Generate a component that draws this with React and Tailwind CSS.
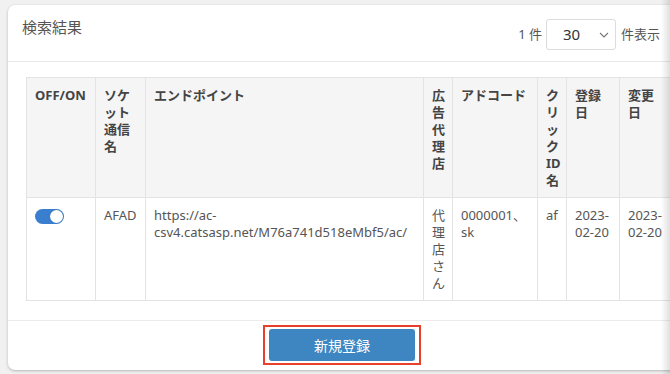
import React from "react";

const font = { fontFamily: '"Noto Sans", "Noto Sans CJK JP", sans-serif' };

export default function App() {
  const th = "border border-[#e3e3e3] align-top text-left px-[8px] pt-[9px] pb-[8px] font-bold text-[#444] text-[13px] leading-[17px]";
  const td = "border border-[#e3e3e3] align-top text-left px-[8px] pt-[9px] pb-[8px] text-[#555] text-[13px] leading-[17px]";
  return (
    <div className="relative w-[670px] h-[374px] overflow-hidden bg-[#f1f1f1]" style={font}>
      <div className="ml-[8px] mt-[5px] w-[680px] h-[365px] bg-white rounded-[7px] shadow-[0_1px_3px_rgba(0,0,0,0.25)] flex flex-col overflow-hidden">
        <div className="h-[57px] shrink-0 border-b border-[#e8e8e8] flex items-start justify-between pl-[14px] pr-[28px]">
          <div className="text-[15px] text-[#555] mt-[13px] leading-[18px]">検索結果</div>
          <div className="flex items-center mt-[14px] text-[13px] text-[#555]">
            <span className="mr-[4px]">1 件</span>
            <div className="w-[70px] h-[31px] border border-[#dcdcdc] rounded-[3px] flex items-center pl-[16px] pr-[6px] justify-between">
              <span className="text-[15px] text-[#333]">30</span>
              <svg width="10" height="6" viewBox="0 0 10 6" className="mt-[1px]">
                <path d="M1 1 L5 5 L9 1" fill="none" stroke="#777" strokeWidth="1.1" />
              </svg>
            </div>
            <span className="ml-[5px]">件表示</span>
          </div>
        </div>
        <div className="pl-[18px] pt-[15px] pb-[19px] border-b border-[#ececec] overflow-hidden">
          <table className="table-fixed border-collapse w-[720px]">
            <colgroup>
              <col className="w-[69px]" />
              <col className="w-[50px]" />
              <col className="w-[278px]" />
              <col className="w-[29px]" />
              <col className="w-[85px]" />
              <col className="w-[29px]" />
              <col className="w-[53px]" />
              <col />
            </colgroup>
            <thead>
              <tr className="bg-[#f5f5f5]">
                <th className={th}>OFF/ON</th>
                <th className={th}>ソケット通信名</th>
                <th className={th}>エンドポイント</th>
                <th className={th}>広告代理店</th>
                <th className={th}>アドコード</th>
                <th className={th}>クリックID名</th>
                <th className={th}>登録日</th>
                <th className={th}>
                  <div className="w-[37px]">変更日</div>
                </th>
              </tr>
            </thead>
            <tbody>
              <tr>
                <td className={td}>
                  <div className="mt-[2px] w-[29px] h-[15px] rounded-full bg-[#3a7fcf] relative">
                    <div className="absolute right-[1px] top-[1px] w-[13px] h-[13px] rounded-full bg-white shadow-[0_0_1px_rgba(0,0,0,0.3)]" />
                  </div>
                </td>
                <td className={td}>AFAD</td>
                <td className={td}>https://ac-<br />csv4.catsasp.net/M76a741d518eMbf5/ac/</td>
                <td className={td}>代理店さん</td>
                <td className={td}>0000001、sk</td>
                <td className={td}>af</td>
                <td className={td}>2023-<br />02-20</td>
                <td className={td}>2023-<br />02-20</td>
              </tr>
            </tbody>
          </table>
        </div>
        <div className="flex-1 flex items-start">
          <div className="ml-[255px] mt-[4px] border-2 border-[#e8402a] px-[4px] py-[2px]">
            <button className="w-[146px] h-[32px] bg-[#3d86c1] rounded-[3px] text-white text-[14px] flex items-center justify-center">
              新規登録
            </button>
          </div>
        </div>
      </div>
      <div className="absolute top-0 right-0 w-[9px] h-full bg-gradient-to-r from-transparent to-[rgba(0,0,0,0.12)]" />
    </div>
  );
}
